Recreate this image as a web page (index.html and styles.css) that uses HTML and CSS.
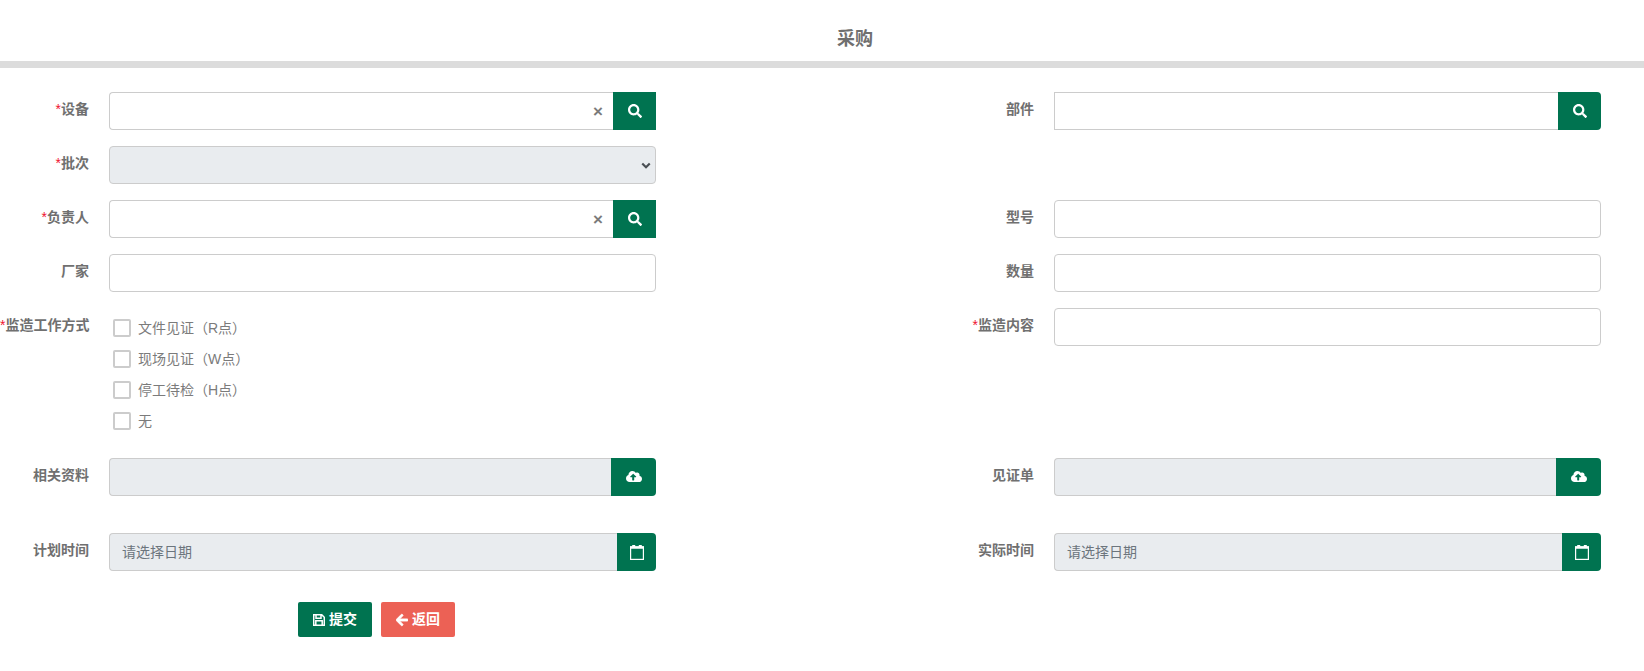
FILE: index.html
```html
<!DOCTYPE html>
<html lang="zh-CN">
<head>
<meta charset="utf-8">
<title>采购</title>
<link rel="stylesheet" href="styles.css">
</head>
<body>
<header class="title-bar"><h1 class="title">采购</h1></header>
<form class="form">
  <div class="columns">
    <div class="col">
      <div class="row">
        <label class="lbl"><span class="req">*</span>设备</label>
        <div class="group">
          <div class="input-wrap"><input class="field field-lead" type="text"><span class="clear">×</span></div>
          <button type="button" class="addon addon-search addon-square"><svg class="ic-search" viewBox="0 0 512 512"><path d="M505 442.7L405.3 343c-4.5-4.5-10.6-7-17-7H372c27.6-35.3 44-79.7 44-128C416 93.1 322.9 0 208 0S0 93.1 0 208s93.1 208 208 208c48.3 0 92.7-16.4 128-44v16.3c0 6.4 2.5 12.5 7 17l99.7 99.7c9.4 9.4 24.6 9.4 33.9 0l28.3-28.3c9.4-9.4 9.4-24.6.1-34zM208 336c-70.7 0-128-57.2-128-128 0-70.7 57.2-128 128-128 70.7 0 128 57.2 128 128 0 70.7-57.2 128-128 128z"/></svg></button>
        </div>
      </div>
      <div class="row">
        <label class="lbl"><span class="req">*</span>批次</label>
        <div class="group select-wrap">
          <select class="field field-disabled select" disabled></select>
          <svg class="chevron" viewBox="0 0 12 8"><path d="M1.5 1.5L6 6l4.5-4.5" fill="none" stroke="#4a4f54" stroke-width="2.6"/></svg>
        </div>
      </div>
      <div class="row">
        <label class="lbl"><span class="req">*</span>负责人</label>
        <div class="group">
          <div class="input-wrap"><input class="field field-lead" type="text"><span class="clear">×</span></div>
          <button type="button" class="addon addon-search addon-square"><svg class="ic-search" viewBox="0 0 512 512"><path d="M505 442.7L405.3 343c-4.5-4.5-10.6-7-17-7H372c27.6-35.3 44-79.7 44-128C416 93.1 322.9 0 208 0S0 93.1 0 208s93.1 208 208 208c48.3 0 92.7-16.4 128-44v16.3c0 6.4 2.5 12.5 7 17l99.7 99.7c9.4 9.4 24.6 9.4 33.9 0l28.3-28.3c9.4-9.4 9.4-24.6.1-34zM208 336c-70.7 0-128-57.2-128-128 0-70.7 57.2-128 128-128 70.7 0 128 57.2 128 128 0 70.7-57.2 128-128 128z"/></svg></button>
        </div>
      </div>
      <div class="row">
        <label class="lbl">厂家</label>
        <div class="group"><input class="field" type="text"></div>
      </div>
      <div class="row row-checks">
        <label class="lbl"><span class="req">*</span>监造工作方式</label>
        <div class="checks">
          <label class="check"><span class="box"></span><span class="check-text">文件见证（R点）</span></label>
          <label class="check"><span class="box"></span><span class="check-text">现场见证（W点）</span></label>
          <label class="check"><span class="box"></span><span class="check-text">停工待检（H点）</span></label>
          <label class="check"><span class="box"></span><span class="check-text">无</span></label>
        </div>
      </div>
      <div class="row row-file">
        <label class="lbl">相关资料</label>
        <div class="group">
          <input class="field field-disabled field-lead" type="text" disabled>
          <button type="button" class="addon addon-upload"><svg class="ic-upload" viewBox="0 0 640 512"><path d="M537.6 226.6c4.1-10.7 6.4-22.4 6.4-34.6 0-53-43-96-96-96-19.7 0-38.1 6-53.3 16.2C367 64.2 315.3 32 256 32c-88.4 0-160 71.6-160 160 0 2.7.1 5.4.2 8.1C40.2 219.8 0 273.2 0 336c0 79.5 64.5 144 144 144h368c70.7 0 128-57.3 128-128 0-61.9-44-113.6-102.4-125.4zM393.4 288H328v112c0 8.8-7.2 16-16 16h-48c-8.8 0-16-7.2-16-16V288h-65.4c-14.3 0-21.4-17.2-11.3-27.3l105.4-105.4c6.2-6.2 16.4-6.2 22.6 0l105.4 105.4c10.1 10.1 2.9 27.3-11.3 27.3z"/></svg></button>
        </div>
      </div>
      <div class="row">
        <label class="lbl">计划时间</label>
        <div class="group">
          <input class="field field-disabled field-lead" type="text" placeholder="请选择日期" disabled>
          <button type="button" class="addon addon-date"><svg class="ic-date" viewBox="0 0 14 15"><path class="cal-band" d="M0 1.2h2.2V0h3v1.2h3.6V0h3v1.2H14v2.6H0z"/><rect class="cal-body" x=".6" y="2" width="12.8" height="12.4"/></svg></button>
        </div>
      </div>
    </div>
    <div class="col">
      <div class="row">
        <label class="lbl">部件</label>
        <div class="group">
          <input class="field field-square" type="text">
          <button type="button" class="addon addon-search"><svg class="ic-search" viewBox="0 0 512 512"><path d="M505 442.7L405.3 343c-4.5-4.5-10.6-7-17-7H372c27.6-35.3 44-79.7 44-128C416 93.1 322.9 0 208 0S0 93.1 0 208s93.1 208 208 208c48.3 0 92.7-16.4 128-44v16.3c0 6.4 2.5 12.5 7 17l99.7 99.7c9.4 9.4 24.6 9.4 33.9 0l28.3-28.3c9.4-9.4 9.4-24.6.1-34zM208 336c-70.7 0-128-57.2-128-128 0-70.7 57.2-128 128-128 70.7 0 128 57.2 128 128 0 70.7-57.2 128-128 128z"/></svg></button>
        </div>
      </div>
      <div class="row row-empty"></div>
      <div class="row">
        <label class="lbl">型号</label>
        <div class="group"><input class="field" type="text"></div>
      </div>
      <div class="row">
        <label class="lbl">数量</label>
        <div class="group"><input class="field" type="text"></div>
      </div>
      <div class="row row-checks">
        <label class="lbl"><span class="req">*</span>监造内容</label>
        <div class="group"><input class="field" type="text"></div>
      </div>
      <div class="row row-file">
        <label class="lbl">见证单</label>
        <div class="group">
          <input class="field field-disabled field-lead" type="text" disabled>
          <button type="button" class="addon addon-upload"><svg class="ic-upload" viewBox="0 0 640 512"><path d="M537.6 226.6c4.1-10.7 6.4-22.4 6.4-34.6 0-53-43-96-96-96-19.7 0-38.1 6-53.3 16.2C367 64.2 315.3 32 256 32c-88.4 0-160 71.6-160 160 0 2.7.1 5.4.2 8.1C40.2 219.8 0 273.2 0 336c0 79.5 64.5 144 144 144h368c70.7 0 128-57.3 128-128 0-61.9-44-113.6-102.4-125.4zM393.4 288H328v112c0 8.8-7.2 16-16 16h-48c-8.8 0-16-7.2-16-16V288h-65.4c-14.3 0-21.4-17.2-11.3-27.3l105.4-105.4c6.2-6.2 16.4-6.2 22.6 0l105.4 105.4c10.1 10.1 2.9 27.3-11.3 27.3z"/></svg></button>
        </div>
      </div>
      <div class="row">
        <label class="lbl">实际时间</label>
        <div class="group">
          <input class="field field-disabled field-lead" type="text" placeholder="请选择日期" disabled>
          <button type="button" class="addon addon-date"><svg class="ic-date" viewBox="0 0 14 15"><path class="cal-band" d="M0 1.2h2.2V0h3v1.2h3.6V0h3v1.2H14v2.6H0z"/><rect class="cal-body" x=".6" y="2" width="12.8" height="12.4"/></svg></button>
        </div>
      </div>
    </div>
  </div>
  <div class="actions">
    <button type="button" class="btn btn-submit"><svg class="ic-save" viewBox="0 0 12 12"><path d="M.7.7h8l2.6 2.6v8H.7z M3 .8v3.4h5V.8 M2.8 11.2V6.8h6.4v4.4"/></svg><span class="btn-text">提交</span></button>
    <button type="button" class="btn btn-back"><svg class="ic-arrow" viewBox="0 0 448 512"><path d="M257.5 445.1l-22.2 22.2c-9.4 9.4-24.6 9.4-33.9 0L7 273c-9.4-9.4-9.4-24.6 0-33.9L201.4 44.7c9.4-9.4 24.6-9.4 33.9 0l22.2 22.2c9.5 9.5 9.3 25-.4 34.3L136.6 216H424c13.3 0 24 10.7 24 24v32c0 13.3-10.7 24-24 24H136.6l120.5 114.8c9.8 9.3 10 24.8.4 34.3z"/></svg><span class="btn-text">返回</span></button>
  </div>
</form>
</body>
</html>
```
FILE: styles.css
```css
* { box-sizing: border-box; }
html, body { margin: 0; padding: 0; background: #fff; }
body {
  font-family: "Liberation Sans", "Noto Sans CJK SC", sans-serif;
  font-size: 14px;
  color: #6c757d;
  height: 671px;
  overflow: hidden;
}
.title-bar {
  height: 68px;
  border-bottom: 7px solid #dcdcdc;
  padding-top: 26px;
  text-align: center;
  padding-left: 66px;
}
.title {
  margin: 0;
  font-size: 18px;
  line-height: 27px;
  font-weight: 700;
  color: #6f6f6f;
}
.form { padding-top: 24px; padding-right: 43px; }
.columns { display: flex; justify-content: space-between; }
.col { width: 656px; display: flex; flex-direction: column; }
.row { display: flex; gap: 20px; min-height: 38px; margin-bottom: 16px; }
.row-empty { visibility: hidden; }
.row-checks { height: 142px; margin-bottom: 8px; }
.row-file { margin-bottom: 37px; }
.col > .row:last-child { margin-bottom: 0; }
.lbl {
  width: 89px;
  flex: none;
  text-align: right;
  font-weight: 700;
  line-height: 20px;
  padding-top: 7px;
  white-space: nowrap;
  color: #707070;
}
.req { color: #f0142f; font-weight: 400; }
.group { flex: 1; display: flex; min-width: 0; height: 38px; position: relative; }
.input-wrap { flex: 1; position: relative; min-width: 0; display: flex; }
.field {
  flex: 1;
  min-width: 0;
  width: 100%;
  height: 38px;
  border: 1px solid #cccccc;
  border-radius: 4px;
  background: #fff;
  padding: 6px 12px;
  font: inherit;
  color: #495057;
  outline: none;
}
.field::placeholder { color: #6c757d; opacity: 1; }
.field-lead { border-radius: 4px 0 0 4px; border-right: 0; }
.field-square { border-radius: 0; border-right: 0; }
.field-disabled { background: #e9ecef; opacity: 1; }
.select { appearance: none; -webkit-appearance: none; }
.chevron { position: absolute; right: 5px; top: 16px; width: 10px; height: 7px; }
.clear {
  position: absolute;
  right: 10px;
  top: 50%;
  transform: translateY(-50%);
  font: 700 17px/1 "Liberation Sans", sans-serif;
  color: #7b7b7b;
}
.addon {
  flex: none;
  height: 38px;
  border: 0;
  padding: 0;
  background: #007350;
  border-radius: 0 4px 4px 0;
  display: flex;
  align-items: center;
  justify-content: center;
  fill: #fff;
}
.addon-search { width: 43px; }
.addon-square { border-radius: 0; }
.addon-upload { width: 45px; }
.addon-date { width: 39px; }
.ic-search { width: 14px; height: 14px; }
.ic-upload { width: 16px; height: 13px; position: relative; top: -1px; }
.ic-date { width: 14px; height: 15px; flex: none; }
.cal-band { fill: #fff; }
.cal-body { fill: none; stroke: #fff; stroke-width: 1.2; }
.checks { padding: 11px 0 0 4px; display: flex; flex-direction: column; gap: 13px; }
.check { display: flex; align-items: center; height: 18px; gap: 7px; color: #7b7b7b; white-space: nowrap; }
.check-text { position: relative; top: -1px; }
.box { width: 18px; height: 18px; border: 2px solid #ccc; border-radius: 2px; background: #fff; flex: none; }
.actions { display: flex; gap: 9px; padding: 31px 0 0 298px; }
.btn {
  width: 74px;
  height: 35px;
  border: 0;
  border-radius: 2px;
  color: #fff;
  font: 700 14px/1 "Liberation Sans", "Noto Sans CJK SC", sans-serif;
  display: flex;
  align-items: center;
  justify-content: center;
  gap: 4px;
  padding: 0;
}
.btn-text { position: relative; top: -1px; }
.ic-save { width: 12px; height: 12px; fill: none; stroke: #fff; stroke-width: 1.5; }
.ic-arrow { width: 12px; height: 14px; fill: #fff; stroke: #fff; stroke-width: 30; }
.btn-submit { background: #007350; }
.btn-back { background: #ec6155; }
```
